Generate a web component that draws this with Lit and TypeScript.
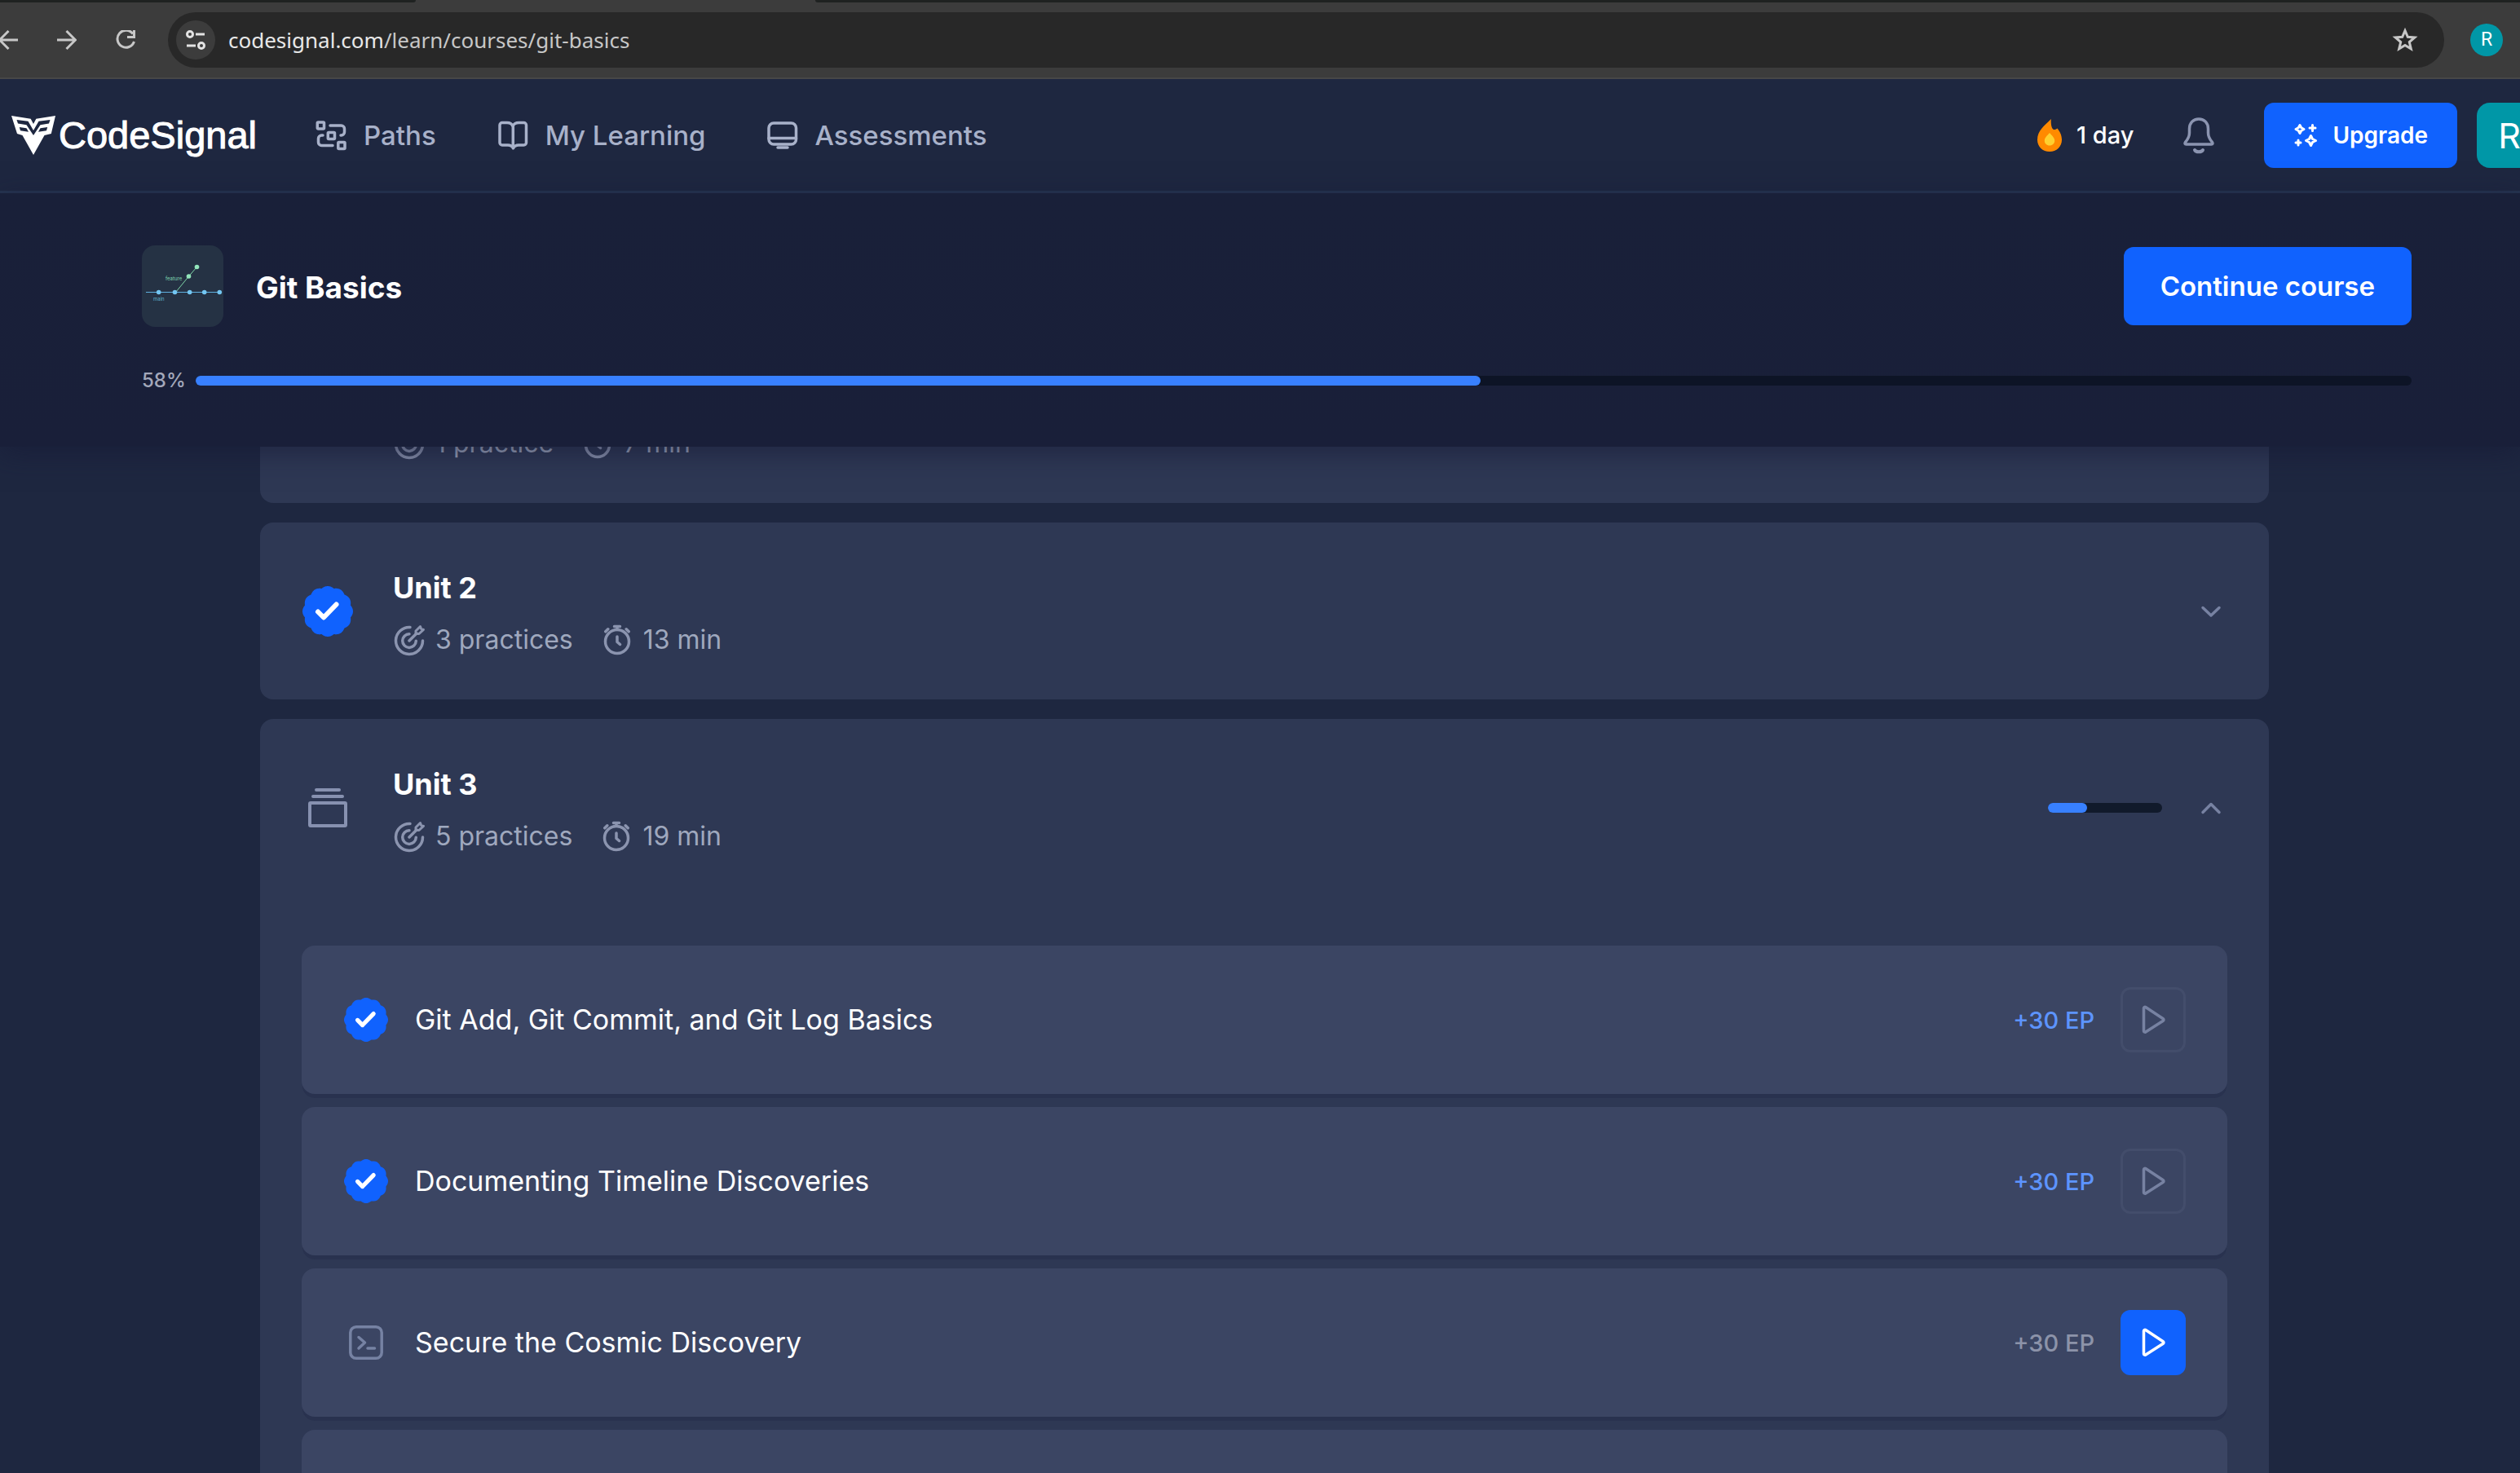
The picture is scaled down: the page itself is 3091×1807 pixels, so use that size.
import { LitElement, html, svg, css, nothing } from "lit";
import { customElement } from "lit/decorators.js";

interface Unit {
  title: string;
  practices: string;
  minutes: string;
  status: "hidden" | "done" | "open";
}

interface Lesson {
  title: string;
  points: string;
  done: boolean;
}

const units: Unit[] = [
  { title: "", practices: "1 practice", minutes: "7 min", status: "hidden" },
  { title: "Unit 2", practices: "3 practices", minutes: "13 min", status: "done" },
  { title: "Unit 3", practices: "5 practices", minutes: "19 min", status: "open" },
];

const lessons: Lesson[] = [
  { title: "Git Add, Git Commit, and Git Log Basics", points: "+30 EP", done: true },
  { title: "Documenting Timeline Discoveries", points: "+30 EP", done: true },
  { title: "Secure the Cosmic Discovery", points: "+30 EP", done: false },
];

const courseProgress = 58;
const unitProgress = 34;

/** Outline of a rosette with twelve rounded lobes, centred on 0,0. */
const rosette = (() => {
  const points: string[] = [];
  for (let i = 0; i < 240; i++) {
    const a = (i / 240) * Math.PI * 2;
    const r = 29 + 2 * Math.abs(Math.cos(6 * a));
    points.push(`${(r * Math.sin(a)).toFixed(2)},${(-r * Math.cos(a)).toFixed(2)}`);
  }
  return points.join(" ");
})();

const badge = html`<svg class="badge" viewBox="-31 -31 62 62" aria-hidden="true">
  <polygon points=${rosette} fill="#1062fe" />
  <path d="M-12 0.5 L-5 7.5 L10.5 -8.5" fill="none" stroke="#fff" stroke-width="6" stroke-linecap="round" stroke-linejoin="round" />
</svg>`;

const icon = (body: unknown, width = 3.5) => html`<svg
  class="icon" viewBox="0 0 40 40" fill="none" stroke="currentColor"
  stroke-width=${width} stroke-linecap="round" stroke-linejoin="round" aria-hidden="true">${body}</svg>`;

const pathsIcon = icon(svg`
  <rect x="3.3" y="4" width="8.2" height="8" rx="1" /><rect x="16.3" y="16.5" width="8.2" height="8" rx="1" />
  <rect x="28.8" y="28.5" width="8.2" height="8" rx="1" />
  <path d="M19 8h13.500a4 4 0 0 1 4 4v4a4 4 0 0 1-4 4h-.5M10 20h-1.500a4 4 0 0 0-4 4v4.500a4 4 0 0 0 4 4h13.500" />`);
const bookIcon = icon(svg`
  <path d="M20 9c-1-3-4-4.500-7-4.500h-6a3 3 0 0 0-3 3v21.500a3 3 0 0 0 3 3h7c3 0 5 1 6.500 3.800c1.500-2.800 3.500-3.800 6.500-3.800h6.500a3 3 0 0 0 3-3v-21.500a3 3 0 0 0-3-3h-6c-3 0-6.500 1.500-7.500 4.500zM20.300 9v26" />`);
const monitorIcon = icon(svg`<rect x="3" y="5" width="33.500" height="26" rx="6" /><path d="M3 23.500h33.500M14 35h12" />`);
const targetIcon = icon(svg`
  <path d="M21 4.500a16.500 16.500 0 1 0 15.500 16.500M20 12.800a8.300 8.300 0 1 0 8.300 8.500M20 21l9-9" />
  <path d="M28 12.500v-3.500l5.500-5.500l1 2.800l3 1l-5.500 5.200z" stroke-width="3" />`);
const stopwatchIcon = icon(svg`
  <circle cx="20" cy="22" r="14.500" /><path d="M16.500 3.500h7M20 3.500v4M5.800 9.800l3-3M34.200 9.800l-3-3M20 16v6.500l3.500 3" />`);
const terminalIcon = html`<svg class="terminal" viewBox="0 0 42 42" fill="none" stroke="currentColor" stroke-width="3.500" stroke-linecap="round" stroke-linejoin="round" aria-hidden="true">
  <rect x="1.800" y="1.800" width="38.400" height="38.400" rx="7" /><path d="M12 14.500l7.500 6.500l-7.500 7M23 28h8.500" /></svg>`;
const stackIcon = html`<svg class="stack" viewBox="0 0 48 48" fill="none" stroke="currentColor" stroke-width="4" stroke-linecap="round" stroke-linejoin="round" aria-hidden="true">
  <path d="M10 2h28M6 10h36" /><rect x="2" y="18" width="44" height="28" rx="1" /></svg>`;
const playIcon = icon(svg`<path d="M8.500 5.800v28a1.500 1.500 0 0 0 2.300 1.200l21.500-13.800a1.500 1.500 0 0 0 0-2.500l-21.500-14.200a1.500 1.500 0 0 0-2.300 1.300z" />`);

@customElement("app-root")
export class AppRoot extends LitElement {
  static styles = css`
    :host {
      display: flex;
      flex-direction: column;
      height: 100vh;
      overflow: hidden;
      background: #1e2740;
      color: #fff;
      font-family: Inter, sans-serif;
    }
    * { box-sizing: border-box; }
    button {
      border: 0;
      padding: 0;
      background: none;
      color: inherit;
      font: inherit;
      cursor: pointer;
    }
    a { color: inherit; text-decoration: none; }
    h1, h2, h3, p, ul { margin: 0; padding: 0; }
    ul { list-style: none; }
    svg { display: block; flex: none; }
    .icon { width: 40px; height: 40px; }

    .browser {
      flex: none;
      background: #3c3c3c;
      border-bottom: 2px solid #474747;
    }
    .tabs {
      display: grid;
      grid-template-columns: 510px 490px 1fr;
      height: 3px;
    }
    .tabs span { background: #1f2221; }
    .tabs span:first-child { border-radius: 0 0 8px 0; }
    .tabs span:last-child { grid-column: 3; border-radius: 0 0 0 8px; }
    .toolbar {
      display: flex;
      align-items: center;
      gap: 48px;
      margin-left: -2px;
      padding: 12px 21px 12px 0;
      color: #c7c7c7;
    }
    .toolbar button svg { width: 24px; height: 24px; }
    .address {
      flex: 1;
      display: flex;
      align-items: center;
      height: 68px;
      margin-left: -8px;
      margin-right: -16px;
      padding: 0 32px 0 10px;
      border-radius: 34px;
      background: #282828;
    }
    .address .site {
      display: grid;
      place-items: center;
      width: 48px;
      height: 48px;
      border-radius: 24px;
      background: #3c3c3c;
      color: #e3e3e3;
    }
    .url {
      flex: 1;
      margin-left: 16px;
      font: 26px/36px "Noto Sans", sans-serif;
    }
    .url b { font-weight: 400; color: #e8e8e8; }
    .address .star svg { width: 32px; height: 32px; }
    .profile {
      width: 40px;
      height: 40px;
      border-radius: 20px;
      background: #0097a7;
      color: #fff;
      font: 23px/40px Roboto, sans-serif;
      text-align: center;
    }

    .site-header {
      flex: none;
      display: flex;
      align-items: center;
      height: 140px;
      padding-left: 14px;
      border-bottom: 3px solid #263450;
      overflow: hidden;
    }
    .logo {
      display: flex;
      align-items: center;
      gap: 4px;
      margin-right: 71px;
      font: 47px/56px "Liberation Sans", sans-serif;
      -webkit-text-stroke: 1px #fff;
    }
    .logo svg { width: 54px; height: 48px; }
    nav {
      flex: 1;
      display: flex;
      gap: 74px;
      color: #a8b1c9;
      font-weight: 500;
      font-size: 33px;
      line-height: 40px;
    }
    nav a { display: flex; gap: 20px; }
    .streak {
      display: flex;
      align-items: center;
      gap: 18px;
      font-weight: 500;
      font-size: 29px;
      line-height: 40px;
    }
    .bell { margin: 0 60px; color: #8b94b0; }
    .upgrade {
      display: flex;
      align-items: center;
      gap: 16px;
      height: 80px;
      padding: 0 36px;
      border-radius: 12px;
      background: #1062fe;
      font-weight: 600;
      font-size: 28px;
    }
    .account {
      flex: none;
      width: 80px;
      height: 80px;
      margin: 0 -27px 0 24px;
      border-radius: 16px;
      background: #0097a7;
      font-size: 43px;
    }

    .course {
      position: relative;
      z-index: 1;
      flex: none;
      display: flex;
      flex-direction: column;
      gap: 52px;
      padding: 64px 133px 67px 174px;
      background: linear-gradient(#192039, #191f39);
      box-shadow: 0 8px 32px #15193699;
    }
    .course-top { display: flex; align-items: center; gap: 40px; }
    .thumb { width: 100px; height: 100px; border-radius: 16px; background: #253244; }
    h1 { flex: 1; padding-top: 4px; font-weight: 700; font-size: 37px; line-height: 48px; }
    .continue {
      height: 96px;
      padding: 0 45px;
      border-radius: 12px;
      background: #1062fe;
      font-weight: 600;
      font-size: 33px;
    }
    .course-progress {
      display: flex;
      align-items: center;
      gap: 12px;
      color: #a3a8ba;
      font-weight: 500;
      font-size: 24px;
      line-height: 28px;
    }
    .track {
      flex: 1;
      height: 12px;
      border-radius: 6px;
      background: #0d1426;
    }
    .track div { height: 12px; border-radius: 6px; background: #3880ff; }

    main { flex: 1; min-height: 0; overflow: hidden; padding: 0 308px 0 319px; }
    .units {
      display: flex;
      flex-direction: column;
      gap: 24px;
      margin-top: -148px;
    }
    .unit { border-radius: 16px; background: #2e3854; }
    .unit-head {
      display: flex;
      align-items: center;
      height: 217px;
      padding: 0 51px;
    }
    .unit-mark {
      display: grid;
      place-items: center;
      width: 64px;
      margin-right: 48px;
      color: #8791b0;
    }
    .unit-mark .badge { width: 62px; height: 62px; }
    .stack { width: 48px; height: 48px; }
    .unit-text { flex: 1; display: flex; flex-direction: column; gap: 20px; padding-top: 2px; }
    h2 { height: 48px; font-weight: 700; font-size: 36px; line-height: 48px; }
    .meta {
      display: flex;
      gap: 34px;
      color: #9fa8be;
      font-size: 32px;
      line-height: 40px;
    }
    .meta span { display: flex; gap: 12px; }
    .meta svg { color: #8b94af; }
    .unit-track { flex: none; width: 140px; margin-right: 40px; background: #111a2b; }
    .chevron { color: #7782a2; }

    .lessons {
      display: flex;
      flex-direction: column;
      gap: 16px;
      padding: 61px 51px;
    }
    .lesson {
      display: flex;
      align-items: center;
      height: 182px;
      padding: 0 51px;
      border-radius: 16px;
      background: #3b4563;
      box-shadow: 0 6px 0 -1px #29324f;
    }
    .lesson-mark { display: grid; place-items: center; width: 56px; margin-right: 32px; color: #7682a3; }
    .lesson-mark .badge { width: 54px; height: 54px; }
    .terminal { width: 42px; height: 42px; }
    h3 { flex: 1; font-weight: 400; font-size: 34px; line-height: 44px; }
    .points { margin-right: 32px; color: #8c93a9; font-weight: 500; font-size: 29px; }
    .points.earned { color: #5d94ff; }
    .play {
      display: grid;
      place-items: center;
      width: 80px;
      height: 80px;
      border-radius: 12px;
      background: #1062fe;
    }
    .play.quiet { border: 3px solid #434d6b; background: none; color: #7782a2; }
  `;

  private browserBar() {
    const stroke = (d: string) => html`<svg viewBox="0 0 24 24" fill="none" stroke="currentColor" stroke-width="3" aria-hidden="true"><path d=${d} /></svg>`;
    return html`<div class="browser">
      <div class="tabs"><span></span><span></span></div>
      <div class="toolbar">
        <button aria-label="Back">${stroke("M24 12H2M12.500 1L1.500 12L12.500 23")}</button>
        <button aria-label="Forward">${stroke("M0 12H22M11.500 1L22.500 12L11.500 23")}</button>
        <button aria-label="Reload">${stroke("M21 4.500A10.500 10.500 0 1 0 22.500 14M22.500 0V8.500H14")}</button>
        <div class="address">
          <button class="site" aria-label="Site information">
            <svg viewBox="0 0 24 24" fill="none" stroke="currentColor" stroke-width="3" aria-hidden="true">
              <circle cx="5" cy="5" r="3.500" /><path d="M12 5h11M1 19h11" /><circle cx="19" cy="19" r="3.500" />
            </svg>
          </button>
          <div class="url" role="textbox" aria-label="Address" tabindex="0"><b>codesignal.com</b>/learn/courses/git-basics</div>
          <button class="star" aria-label="Bookmark">
            <svg viewBox="0 0 32 32" fill="none" stroke="currentColor" stroke-width="3" aria-hidden="true">
              <path d="M16 4.500L19.300 12.300L27.800 13L21.300 18.500L23.300 26.800L16 22.400L8.700 26.800L10.700 18.500L4.200 13L12.700 12.300Z" />
            </svg>
          </button>
        </div>
        <button class="profile" aria-label="Profile">R</button>
      </div>
    </div>`;
  }

  private header() {
    const wing = svg`<path d="M6.500 5L20.500 6.800L27 18V24L18.500 11.200L8 9.600ZM9.800 14L18.500 15.300L21 19.800L11 18.300Z" fill="#1e2740" />`;
    return html`<header class="site-header">
      <a class="logo" href="#">
        <svg viewBox="0 0 54 48" aria-hidden="true">
          <path d="M0 0L23.700 3.700L27 10L30.300 3.700L54 0L48.800 22L40.500 24L27 48L13.500 24L7 22Z" fill="#fff" />
          ${wing}<g transform="matrix(-1 0 0 1 54 0)">${wing}</g>
        </svg>
        <span>CodeSignal</span>
      </a>
      <nav>
        <a href="#">${pathsIcon}Paths</a>
        <a href="#">${bookIcon}My Learning</a>
        <a href="#">${monitorIcon}Assessments</a>
      </nav>
      <div class="streak">
        <svg width="30" height="40" viewBox="0 0 30 40" aria-hidden="true">
          <path d="M16.800 0C16.300 6 17.500 13 20.500 13C22.500 13 23.500 12.300 24.500 11.500C27.500 15 30 20 30 25.500C30 34 23.500 40 15 40C6.500 40 0 34 0 25.500C0 14 9 8 16.800 0Z" fill="#ff8a00" />
          <path d="M15 17C18 20.500 21.200 23 21.200 26.500C21.200 30 18.500 32.500 15 32.500C11.500 32.500 8.800 30 8.800 26.500C8.800 23 12 20.500 15 17Z" fill="#ffd02f" />
        </svg>
        <span>1 day</span>
      </div>
      <button class="bell" aria-label="Notifications">
        <svg width="40" height="48" viewBox="0 0 40 48" fill="none" stroke="currentColor" stroke-width="3.500" stroke-linecap="round" stroke-linejoin="round" aria-hidden="true">
          <path d="M20 4c-7 0-11.500 5-11.500 12v5c0 5-2 8-5 11.500c-1 1.500-.5 2.500 1 2.500h31c1.500 0 2-1 1-2.500c-3-3.500-5-6.500-5-11.500v-5c0-7-4.500-12-11.500-12z" />
          <path d="M15 42c1.500 3 8.500 3 10 0" stroke-width="4" />
        </svg>
      </button>
      <button class="upgrade">
        <svg width="32" height="32" viewBox="0 0 32 32" fill="none" stroke="currentColor" stroke-width="3" stroke-linecap="round" stroke-linejoin="round" aria-hidden="true">
          <path d="M8 3.500L9.800 6.700L13 8.500L9.800 10.300L8 13.500L6.200 10.300L3 8.500L6.200 6.700ZM21.500 16.500L23.500 20.500L27.500 22.500L23.500 24.500L21.500 28.500L19.500 24.500L15.500 22.500L19.500 20.500ZM23.500 3.500v7M20 7h7M6 22v6M3 25h6" />
        </svg>
        Upgrade
      </button>
      <button class="account" aria-label="Account">R</button>
    </header>`;
  }

  private courseHeader() {
    return html`<section class="course">
      <div class="course-top">
        <svg class="thumb" viewBox="0 0 100 100" aria-hidden="true">
          <path d="M5 57.500H97" stroke="#5fb0de" stroke-width="1" />
          <path d="M41.500 57.500L57.500 38L67.500 26.500" fill="none" stroke="#7fd6a8" stroke-width="1" />
          ${[20.700, 40.500, 58.700, 76.700, 95.300].map((x) => svg`<circle cx=${x} cy="57.500" r="2.800" fill="#73c6f2" />`)}
          <circle cx="57.500" cy="38" r="2.800" fill="#93e6bb" /><circle cx="67.500" cy="26.500" r="2.800" fill="#93e6bb" />
          <text x="29" y="42.500" font-size="6" font-family="Inter" fill="#7fd6b0">feature</text>
          <text x="14" y="67.500" font-size="6" font-family="Inter" fill="#5fb0c8">main</text>
        </svg>
        <h1>Git Basics</h1>
        <button class="continue">Continue course</button>
      </div>
      <div class="course-progress">
        <span>${courseProgress}%</span>
        <div class="track" role="progressbar" aria-label="Course progress" aria-valuenow=${courseProgress}>
          <div style="width:${courseProgress}%"></div>
        </div>
      </div>
    </section>`;
  }

  private unit(unit: Unit) {
    const open = unit.status === "open";
    return html`<section class="unit">
      <div class="unit-head">
        <div class="unit-mark">${open ? stackIcon : unit.status === "done" ? badge : nothing}</div>
        <div class="unit-text">
          <h2>${unit.title}</h2>
          <p class="meta"><span>${targetIcon}${unit.practices}</span><span>${stopwatchIcon}${unit.minutes}</span></p>
        </div>
        ${open
          ? html`<div class="track unit-track" role="progressbar" aria-label="Unit progress" aria-valuenow=${unitProgress}>
              <div style="width:${unitProgress}%"></div>
            </div>`
          : nothing}
        ${unit.status === "hidden"
          ? nothing
          : html`<button class="chevron" aria-label=${open ? "Collapse" : "Expand"} aria-expanded=${open ? "true" : "false"}>
              ${icon(svg`<path d=${open ? "M10 25.500L20 15.500L30 25.500" : "M10 15.500L20 25L30 15.500"} />`)}
            </button>`}
      </div>
      ${open ? this.lessonList() : nothing}
    </section>`;
  }

  private lessonList() {
    return html`<ul class="lessons">
      ${lessons.map(
        (l) => html`<li class="lesson">
          <div class="lesson-mark">${l.done ? badge : terminalIcon}</div>
          <h3>${l.title}</h3>
          <span class="points ${l.done ? "earned" : ""}">${l.points}</span>
          <button class="play ${l.done ? "quiet" : ""}" aria-label="Start lesson">${playIcon}</button>
        </li>`
      )}
      <li class="lesson"></li>
    </ul>`;
  }

  render() {
    return html`
      ${this.browserBar()} ${this.header()} ${this.courseHeader()}
      <main><div class="units">${units.map((u) => this.unit(u))}</div></main>
    `;
  }
}
